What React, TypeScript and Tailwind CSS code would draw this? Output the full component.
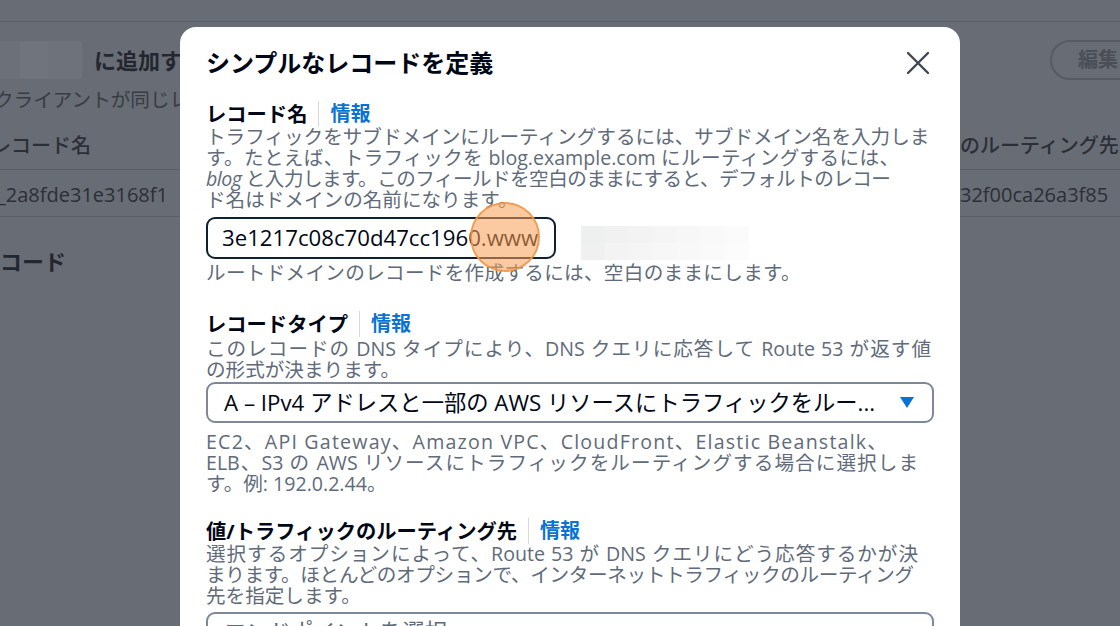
import React from "react";

const Info = () => (
  <span className="flex items-center">
    <span className="mx-[11px] h-[26px] w-px bg-[#d5dbdb]" />
    <span className="text-[20px] font-bold text-[#0972d3]">情報</span>
  </span>
);

const Heading = ({ children }: { children: React.ReactNode }) => (
  <div className="flex h-[24px] items-center leading-[24px]">
    <span className="text-[20.3px] font-bold text-[#000716]">{children}</span>
    <Info />
  </div>
);

type LineDef = { text: React.ReactNode; cls?: string };

const Lines = ({ lines }: { lines: LineDef[] }) => (
  <div className="text-[19.6px] leading-[21px] text-[#5f6b7a]">
    {lines.map((l, i) => (
      <div key={i} className={l.cls ?? "whitespace-nowrap"}>
        {l.text}
      </div>
    ))}
  </div>
);

const blurBlocks = [
  ["#eef0f0", "#f1f1f1", "#f3f3f3", "#f5f5f5", "#f7f7f7", "#f9f9f9", "#fbfbfb"],
  ["#f0f0f0", "#f3f3f3", "#f5f5f5", "#f7f7f7", "#f8f8f8", "#fafafa", "#fcfcfc"],
];

export default function App() {
  return (
    <div className="relative h-[626px] w-[1120px] overflow-hidden bg-[#686c75] font-['Open_Sans','Noto_Sans_CJK_JP',sans-serif]">
      {/* background page */}
      <div className="h-[22px] border-b border-[#5c6069]" />
      <div className="mt-[18px] flex h-[40px] items-center justify-between">
        <div className="flex items-center">
          <div className="flex h-[38px] w-[82px]">
            <div className="h-full w-[20px] bg-[#6c7079]" />
            <div className="h-full w-[28px] bg-[#70747c]" />
            <div className="h-full w-[34px] bg-[#6e727a]" />
          </div>
          <span className="ml-[12px] whitespace-nowrap text-[22px] font-bold text-[#23272f]">
            に追加する
          </span>
        </div>
        <div className="mr-[-40px] flex h-[40px] w-[110px] items-center rounded-full border-2 border-[#575b63] pl-[26px]">
          <span className="text-[20px] font-bold text-[#4a4e56]">編集</span>
        </div>
      </div>
      <div className="mt-[8px] h-[24px] whitespace-nowrap text-[19.6px] leading-[24px] text-[#383c44]">
        <span className="ml-[-6px]">クライアントが同じレコード</span>
      </div>
      <div className="mt-[11px] grid h-[47px] grid-cols-[180px_780px_160px] items-center border-b border-[#5b5f67] text-[20px] font-medium text-[#2b2f37]">
        <div className="overflow-hidden whitespace-nowrap">
          <span className="ml-[-9px]">レコード名</span>
        </div>
        <div />
        <div className="overflow-hidden whitespace-nowrap">のルーティング先</div>
      </div>
      <div className="grid h-[47px] grid-cols-[180px_780px_160px] items-center border-b border-[#5b5f67] pt-[3px] text-[20px] text-[#2b2f37]">
        <div className="overflow-hidden whitespace-nowrap">
          <span className="ml-[-3px]">_2a8fde31e3168f1</span>
        </div>
        <div />
        <div className="overflow-hidden whitespace-nowrap">32f00ca26a3f85</div>
      </div>
      <div className="mt-[30px] whitespace-nowrap text-[22px] font-bold leading-[28px] text-[#23272f]">
        コード
      </div>

      {/* modal */}
      <div className="absolute left-[180px] top-[27px] h-[640px] w-[780px] rounded-[16px] bg-white px-[26px] pt-[20px]">
        <div className="flex h-[32px] items-center justify-between">
          <span className="text-[24px] font-bold leading-[32px] text-[#000716]">
            シンプルなレコードを定義
          </span>
          <svg width="24" height="24" viewBox="0 0 24 24" className="mr-[4px]">
            <path d="M2 2 L22 22 M22 2 L2 22" stroke="#414750" strokeWidth="2.4" strokeLinecap="round" />
          </svg>
        </div>

        <div className="mt-[23px]">
          <Heading>レコード名</Heading>
        </div>
        <Lines
          lines={[
            { text: "トラフィックをサブドメインにルーティングするには、サブドメイン名を入力しま" },
            {
              text: "す。たとえば、トラフィックを blog.example.com にルーティングするには、",
              cls: "w-[693px] text-justify [text-align-last:justify]",
            },
            {
              text: (
                <>
                  <i>blog</i> と入力します。このフィールドを空白のままにすると、デフォルトのレコー
                </>
              ),
              cls: "whitespace-nowrap tracking-[-0.55px]",
            },
            { text: "ド名はドメインの名前になります。" },
          ]}
        />
        <div className="mt-[6px] flex items-center">
          <div className="relative flex h-[42px] w-[350px] items-center rounded-[9px] border-2 border-[#0f2033] pl-[14px]">
            <span className="whitespace-nowrap text-[22.2px] text-[#000716]">3e1217c08c70d47cc1960.www</span>
            <div className="absolute left-[262px] top-[-17px] h-[70px] w-[70px] rounded-full border-2 border-[rgba(240,150,70,0.85)] bg-[rgba(249,158,84,0.55)]" />
          </div>
          <div className="ml-[25px] mt-[10px] flex flex-col">
            {blurBlocks.map((row, r) => (
              <div key={r} className="flex">
                {row.map((c, i) => (
                  <div key={i} className="h-[17px] w-[24px]" style={{ backgroundColor: c }} />
                ))}
              </div>
            ))}
          </div>
        </div>
        <div className="mt-[2px] tracking-[0.3px]">
          <Lines lines={[{ text: "ルートドメインのレコードを作成するには、空白のままにします。" }]} />
        </div>

        <div className="mt-[29px]">
          <Heading>レコードタイプ</Heading>
        </div>
        <div className="mt-[2px]">
          <Lines
            lines={[
              {
                text: "このレコードの DNS タイプにより、DNS クエリに応答して Route 53 が返す値",
                cls: "w-[725px] text-justify [text-align-last:justify]",
              },
              { text: "の形式が決まります。" },
            ]}
          />
        </div>
        <div className="mt-[2px] flex h-[41px] w-[728px] items-center justify-between rounded-[9px] border-2 border-[#7d8998] pl-[16px] pr-[18px]">
          <span className="whitespace-nowrap text-[22.3px] text-[#000716]">
            A – IPv4 アドレスと一部の AWS リソースにトラフィックをルー...
          </span>
          <svg width="14" height="11" viewBox="0 0 14 11">
            <path d="M0 0 H14 L7 11 Z" fill="#0972d3" />
          </svg>
        </div>
        <div className="mt-[8px]">
          <Lines
            lines={[
              {
                text: "EC2、API Gateway、Amazon VPC、CloudFront、Elastic Beanstalk、",
                cls: "whitespace-nowrap tracking-[1.2px]",
              },
              {
                text: "ELB、S3 の AWS リソースにトラフィックをルーティングする場合に選択しま",
                cls: "w-[712px] text-justify [text-align-last:justify]",
              },
              { text: "す。例: 192.0.2.44。" },
            ]}
          />
        </div>

        <div className="mt-[25px]">
          <Heading>値/トラフィックのルーティング先</Heading>
        </div>
        <Lines
          lines={[
            {
              text: "選択するオプションによって、Route 53 が DNS クエリにどう応答するかが決",
              cls: "w-[712px] text-justify [text-align-last:justify]",
            },
            {
              text: "まります。ほとんどのオプションで、インターネットトラフィックのルーティング",
              cls: "whitespace-nowrap tracking-[-0.33px]",
            },
            { text: "先を指定します。" },
          ]}
        />
        <div className="mt-[6px] flex h-[40px] w-[728px] items-center justify-between rounded-[9px] border-2 border-[#7d8998] pl-[16px] pr-[18px]">
          <span className="whitespace-nowrap text-[22.3px] text-[#5f6b7a]">エンドポイントを選択</span>
          <svg width="14" height="11" viewBox="0 0 14 11">
            <path d="M0 0 H14 L7 11 Z" fill="#0972d3" />
          </svg>
        </div>
      </div>
    </div>
  );
}
